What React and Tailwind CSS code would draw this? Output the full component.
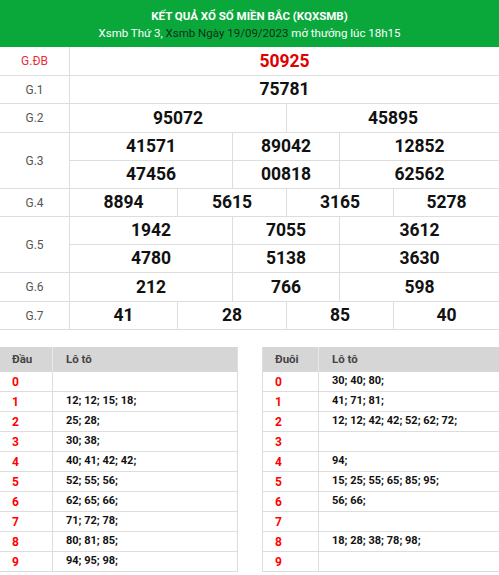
const prizes = [
  { label: "G.ĐB", red: true, rows: [[["50925", 429]]], h: [29] },
  { label: "G.1", rows: [[["75781", 429]]], h: [28] },
  { label: "G.2", rows: [[["95072", 216], ["45895", 213]]], h: [29] },
  {
    label: "G.3",
    rows: [
      [["41571", 162], ["89042", 107], ["12852", 160]],
      [["47456", 162], ["00818", 107], ["62562", 160]],
    ],
    h: [28, 28],
  },
  {
    label: "G.4",
    rows: [[["8894", 107], ["5615", 109], ["3165", 107], ["5278", 106]]],
    h: [28],
  },
  {
    label: "G.5",
    rows: [
      [["1942", 162], ["7055", 107], ["3612", 160]],
      [["4780", 162], ["5138", 107], ["3630", 160]],
    ],
    h: [28, 28],
  },
  { label: "G.6", rows: [[["212", 162], ["766", 107], ["598", 160]]], h: [29] },
  {
    label: "G.7",
    rows: [[["41", 107], ["28", 109], ["85", 107], ["40", 106]]],
    h: [28],
  },
];

const dau = [
  "",
  "12; 12; 15; 18;",
  "25; 28;",
  "30; 38;",
  "40; 41; 42; 42;",
  "52; 55; 56;",
  "62; 65; 66;",
  "71; 72; 78;",
  "80; 81; 85;",
  "94; 95; 98;",
];

const duoi = [
  "30; 40; 80;",
  "41; 71; 81;",
  "12; 12; 42; 42; 52; 62; 72;",
  "",
  "94;",
  "15; 25; 55; 65; 85; 95;",
  "56; 66;",
  "",
  "18; 28; 38; 78; 98;",
  "",
];

function LotoTable({ head, data, firstCol }) {
  return (
    <div className="border-x border-[#ddd]">
      <div className="flex h-[25px] items-center bg-[#d6d6d6] text-[11.5px] font-bold text-[#444]">
        <div className={`${firstCol} h-full flex items-center pl-[12px] border-r border-[#e8e8e8]`}>
          {head}
        </div>
        <div className="pl-[13px]">Lô tô</div>
      </div>
      {data.map((d, i) => (
        <div
          key={i}
          className="flex h-[20px] items-center border-b border-[#ddd] text-[11px] font-bold"
        >
          <div className={`${firstCol} h-full flex items-center pl-[12px] border-r border-[#ddd] text-[12px] text-[#ff0000]`}>
            {i}
          </div>
          <div className="pl-[13px] text-[#111]">{d}</div>
        </div>
      ))}
    </div>
  );
}

export default function App() {
  return (
    <div className="w-[499px] h-[575px] overflow-hidden bg-white font-['Roboto',sans-serif]">
      {/* Header */}
      <div className="h-[47px] bg-[#0aa83b] flex flex-col items-center justify-center gap-[3px] pt-[2px] text-white">
        <div className="text-[11.5px] font-bold leading-[14px]">
          KẾT QUẢ XỔ SỐ MIỀN BẮC (KQXSMB)
        </div>
        <div className="text-[11.5px] leading-[14px]">
          Xsmb Thứ 3, <span className="text-[#10301a]">Xsmb Ngày 19/09/2023</span>{" "}
          mở thưởng lúc 18h15
        </div>
      </div>

      {/* Results */}
      <div>
        {prizes.map((p) => (
          <div key={p.label} className="flex border-b border-[#ddd]">
            <div
              className={`w-[70px] shrink-0 flex items-center justify-center border-r border-[#ddd] text-[12px] ${
                p.red ? "text-[#e8303a]" : "text-[#555]"
              }`}
            >
              {p.label}
            </div>
            <div className="flex-1 flex flex-col">
              {p.rows.map((r, ri) => (
                <div
                  key={ri}
                  style={{ height: p.h[ri] - (ri < p.rows.length - 1 ? 0 : 1) }}
                  className={`flex ${ri < p.rows.length - 1 ? "border-b border-[#ddd]" : ""}`}
                >
                  {r.map(([n, w], ci) => (
                    <div
                      key={ci}
                      style={{ width: w }}
                      className={`flex items-center justify-center text-[17.5px] font-bold ${
                        ci > 0 ? "border-l border-[#ddd]" : ""
                      } ${p.red ? "text-[#e00000]" : "text-[#111]"}`}
                    >
                      {n}
                    </div>
                  ))}
                </div>
              ))}
            </div>
          </div>
        ))}
      </div>

      {/* Loto */}
      <div className="mt-[17px] flex gap-[24px] overflow-hidden">
        <div className="w-[239px] shrink-0 -ml-px">
          <LotoTable head="Đầu" data={dau} firstCol="w-[53px]" />
        </div>
        <div className="w-[250px] shrink-0">
          <LotoTable head="Đuôi" data={duoi} firstCol="w-[56px]" />
        </div>
      </div>
    </div>
  );
}
